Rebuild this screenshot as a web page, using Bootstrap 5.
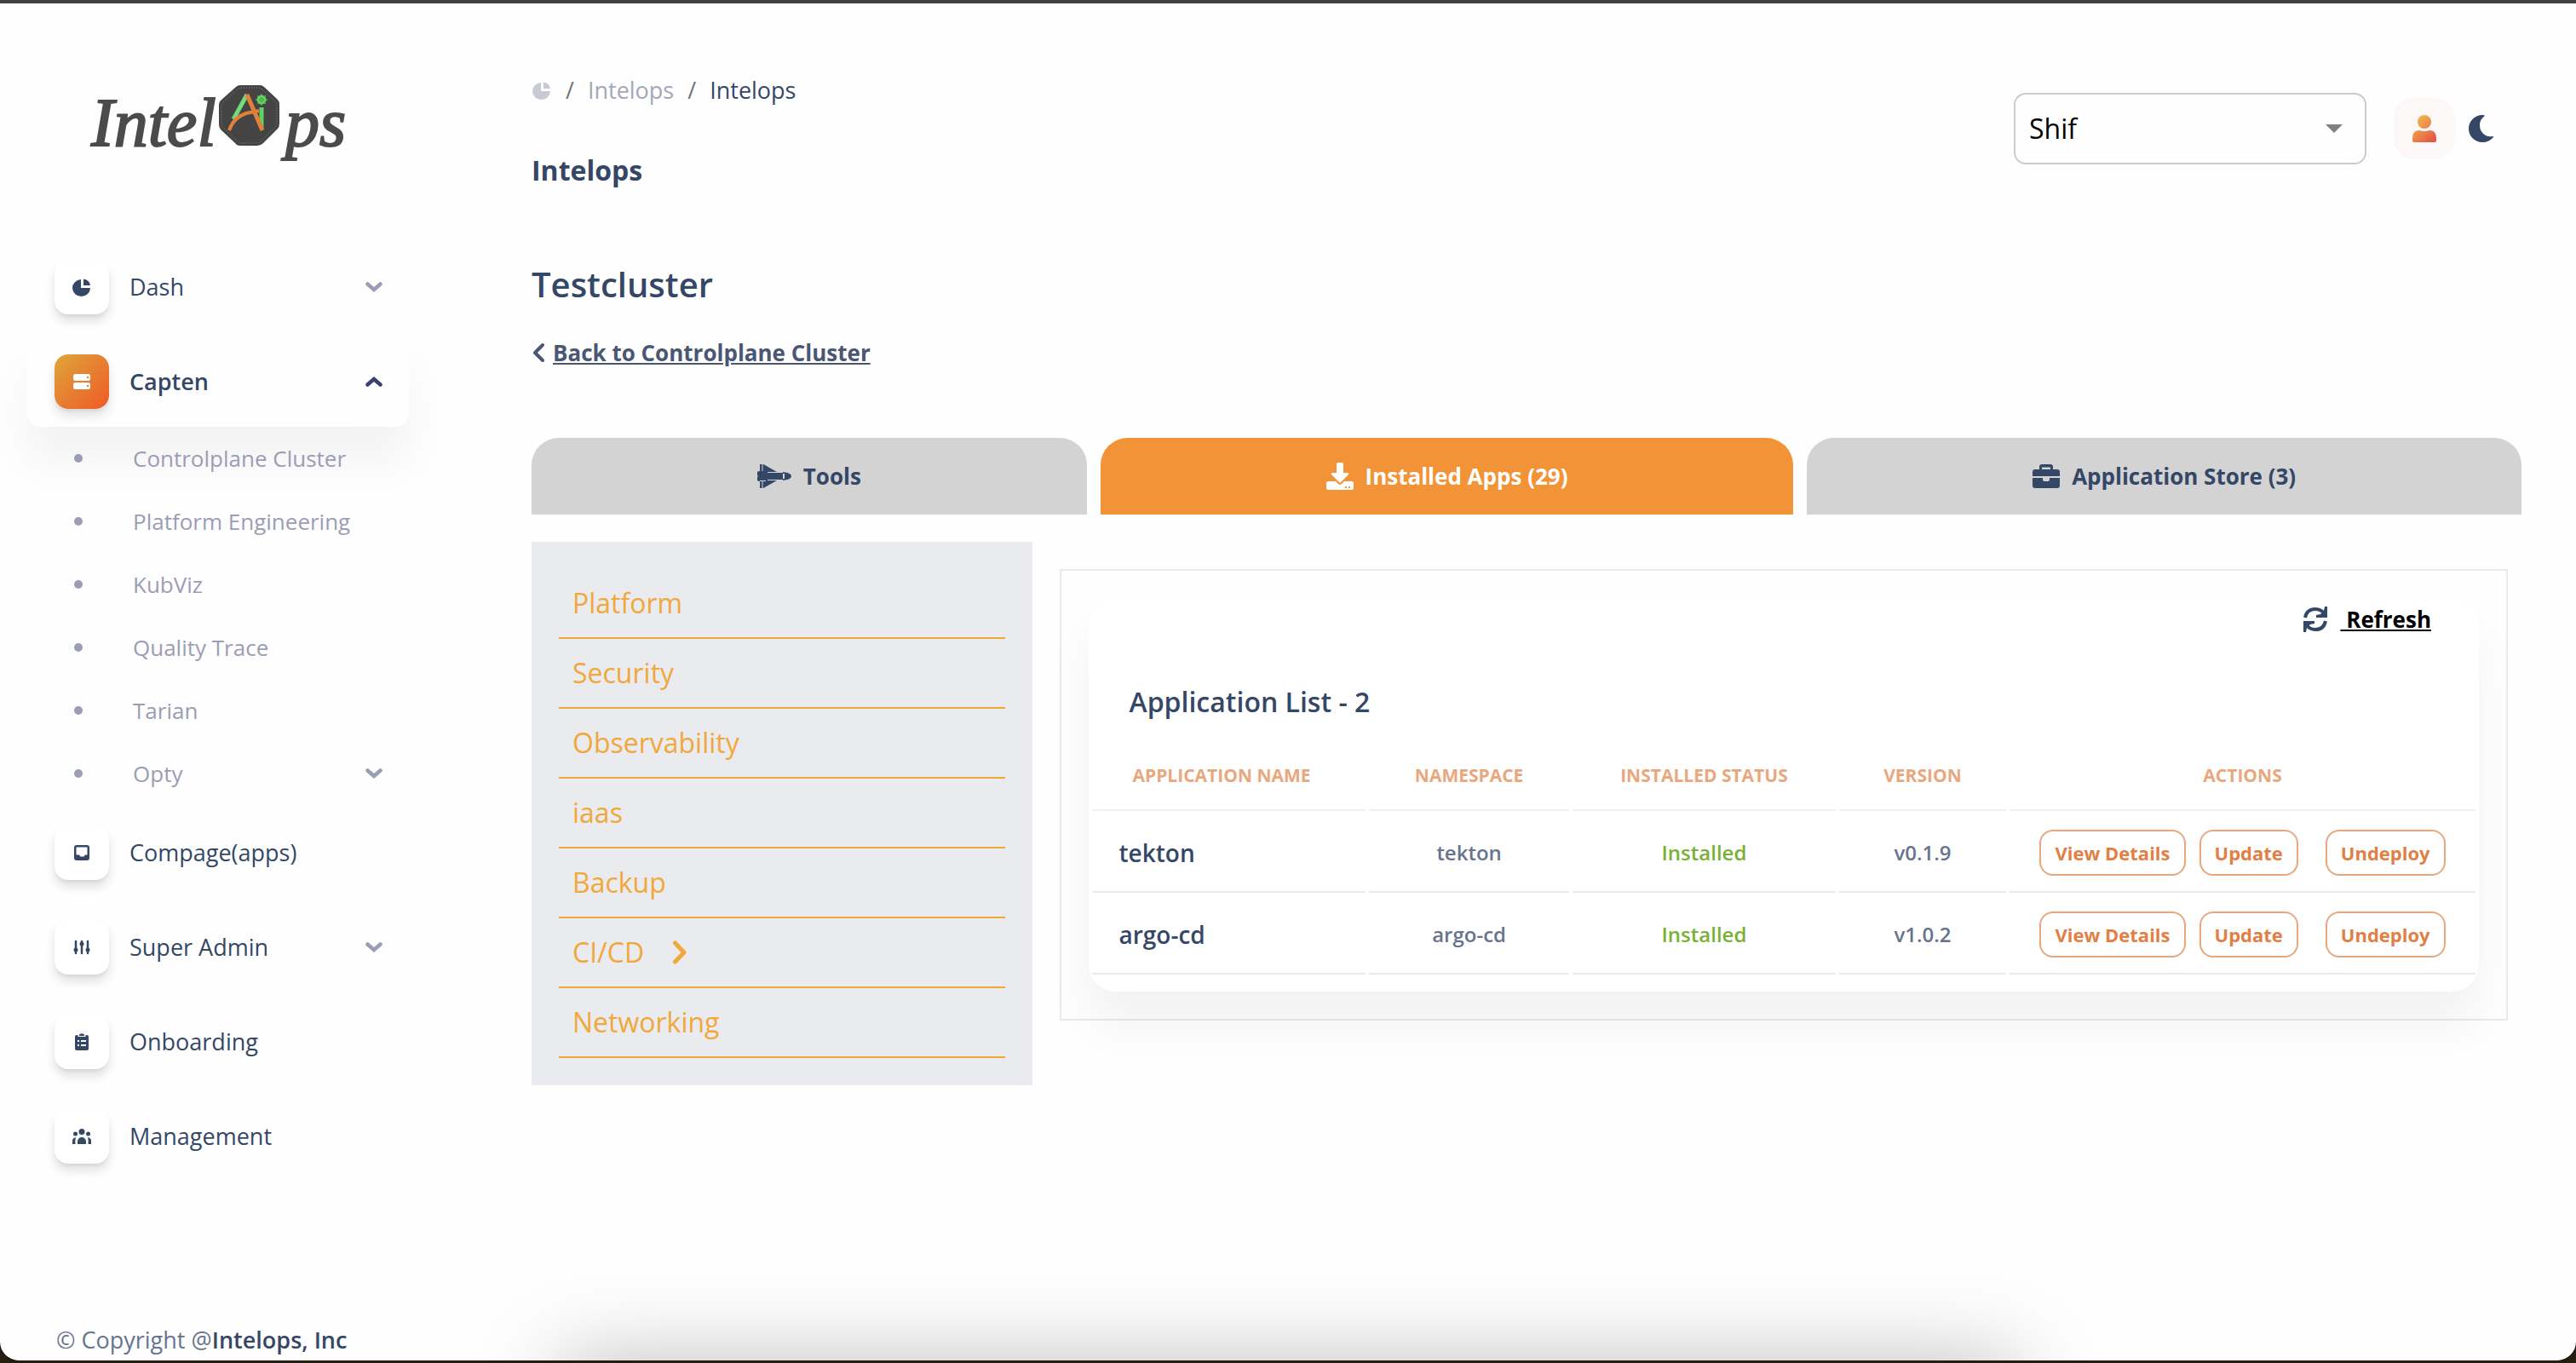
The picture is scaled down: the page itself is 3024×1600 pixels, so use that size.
<!DOCTYPE html>
<html lang="en">
<head>
<meta charset="utf-8">
<meta name="viewport" content="width=device-width, initial-scale=1">
<title>Intelops</title>
<link href="https://cdn.jsdelivr.net/npm/bootstrap@5.3.0/dist/css/bootstrap.min.css" rel="stylesheet">
<style>
:root{--ink:#344767;--soft:#67748e;--muted:#9b9db5;--amber:#f1a83b}
body{font-family:"Open Sans","Noto Sans",sans-serif;font-size:27px;line-height:40px;color:var(--soft);background:#241d10}
svg{display:block;flex:none;fill:currentColor}
.shell{min-height:calc(100vh - 3px);background:#fefefe;border-top:4px solid #434242;border-radius:0 0 22px 22px;overflow:hidden;position:relative;box-shadow:0 1px 0 #000}
.dock-shade{position:absolute;left:656px;right:656px;bottom:-200px;height:200px;box-shadow:0 0 100px rgba(0,0,0,.25)}
.side{width:512px;flex:none;padding:92px 32px 0}
.logo{width:308px;height:108px;margin-left:72px}
.logo text{font:italic 80px "Liberation Serif",serif;fill:#4b4b4b;stroke:#4b4b4b;stroke-width:2px}
.side-nav{padding-top:80px}
.side-link{display:flex;align-items:center;height:106px;margin-bottom:5px;padding:0 32px;border-radius:16px;color:var(--ink);text-decoration:none}
.side-link.current{background:#fefefe;box-shadow:0 40px 54px rgba(0,0,0,.05);font-weight:600}
.tile{width:64px;height:64px;border-radius:16px;display:flex;align-items:center;justify-content:center;margin-right:24px;background:#fff;box-shadow:0 8px 12px rgba(20,20,20,.12),0 4px 4px -2px rgba(20,20,20,.07)}
.current .tile{background:linear-gradient(135deg,#dfa537,#ee5a2a);color:#fff}
.sub-link{display:flex;align-items:center;height:74px;padding:0 32px 0 55px;color:var(--muted);text-decoration:none;font-size:26px}
.sub-link::before{content:"";width:10px;height:10px;border-radius:50%;background:var(--muted);margin-right:59px}
.sub-list{padding-bottom:3px;margin-top:-5px}
.caret{margin-left:auto;margin-right:-1px;color:var(--muted)}
.current .caret{color:#3a416f}
.copyright{padding:161px 0 0 34px}
.copyright a{color:var(--ink);font-weight:600;text-decoration:none}
.page{min-width:0;padding:0 64px 0 112px}
.crumb-bar{padding-top:82px}
.crumbs{--bs-breadcrumb-divider-color:#6c757d;--bs-breadcrumb-item-padding-x:16px;align-items:center;font-size:27px}
.crumbs .breadcrumb-item{display:flex;align-items:center}
.crumbs a{color:#a2a8b8;text-decoration:none}
.crumbs .active{color:var(--ink)}
.page-name{font-size:32px;line-height:44px;font-weight:700;color:var(--ink);margin:52px 0 0}
.cluster{font-size:40px;line-height:56px;font-weight:600;color:var(--ink);margin:84px 0 32px}
.back{display:inline-flex;align-items:center;gap:9px;color:#4a5673;font-weight:700;font-size:26px}
.top-tools{padding:105px 32px 0 0}
.org{width:414px;height:84px;border:2px solid #ccc;border-radius:14px;font-size:32px;color:#000;padding:0 48px 0 16px;margin-right:32px;background:#fefefe url("data:image/svg+xml,%3Csvg xmlns='http://www.w3.org/2000/svg' viewBox='0 0 20 10'%3E%3Cpath fill='%23808080' d='M0 0h20L10 10z'/%3E%3C/svg%3E") no-repeat right 26px center/20px 10px}
.icon-btn{border:0;padding:0;background:none;color:var(--ink)}
.user-btn{width:72px;height:72px;border-radius:24px;background:#fdf8f8;display:flex;align-items:center;justify-content:center}
.tabs{gap:16px;margin-top:78px}
.tab-btn{flex:1 1 auto;height:90px;border:0;border-radius:32px 32px 0 0;background:#d3d3d3;color:var(--ink);font-weight:700;font-size:26px;display:flex;align-items:center;justify-content:center;gap:14px}
.tab-btn.on{background:#f19336;color:#fff}
.cats{width:25.15%;flex:none;background:#eaebef;padding:32px}
.cats a{display:flex;align-items:center;gap:34px;height:82px;padding-left:16px;border-bottom:2px solid var(--amber);color:var(--amber);text-decoration:none;font-size:32px}
.frame{margin:32px 16px 0 32px;border:2px solid #e9eaef;padding:32px;align-self:flex-start;min-width:0}
.sheet{border-radius:32px;background:#fff;box-shadow:0 40px 54px rgba(0,0,0,.05);padding-bottom:16px}
.refresh{display:flex;justify-content:flex-end;align-items:center;gap:14px;padding:5px 56px 0 0;color:var(--ink)}
.refresh a{color:#000;font-weight:700;font-size:26px;white-space:pre}
.list-title{font-size:32px;line-height:44px;font-weight:600;color:var(--ink);margin:0;padding:55px 48px 20px}
.apps{width:100%;table-layout:fixed;border-collapse:separate;border-spacing:4px;text-align:center;font-size:24px;font-weight:600}
.apps th{font-size:21px;line-height:32px;font-weight:700;color:#e9a77e;padding:24px 0;border-bottom:2px solid #f0f0f2}
.apps th:first-child{text-align:left;padding-left:48px}
.apps td{height:92px;padding:0;border-bottom:2px solid #e9eaef}
.apps td:first-child{text-align:left;padding-left:32px;font-size:28px;color:var(--ink)}
.apps .ok{color:#7ab034}
.act{height:54px;border:2px solid #e9a77e;border-radius:16px;background:transparent;color:#e08044;font-size:22px;line-height:32px;font-weight:700;padding:0 16px;white-space:nowrap}
</style>
</head>
<body>
<svg width="0" height="0" class="position-absolute" aria-hidden="true">
<symbol id="pie" viewBox="0 0 24 24"><path d="M11 3v10h11A10.500 10 0 1 1 11 3z"/><path d="M14 2.500a9 8 0 0 1 8 7.500h-8z"/></symbol>
<symbol id="down" viewBox="0 0 20 12"><path d="M2.500 2.500 10 9l7.500-6.500" fill="none" stroke="currentColor" stroke-width="4.500" stroke-linecap="round"/></symbol>
<symbol id="up" viewBox="0 0 20 12"><path d="M2.500 9.500 10 3l7.500 6.500" fill="none" stroke="currentColor" stroke-width="4.500" stroke-linecap="round"/></symbol>
</svg>
<div class="shell">
<div class="d-flex">
<aside class="side">
<a href="#" aria-label="IntelOps">
<svg class="logo" viewBox="0 0 308 108"><text x="3" y="75">Intel</text><text x="231" y="75">ps</text>
<path d="M178 4h23q3 0 5 2l16 15q2 2 2 6v22q0 4-2 6l-17 17q-3 3-7 3h-20q-4 0-6-3l-17-16q-2-3-2-6V27q0-3 2-5l18-16q2-2 5-2z" fill="#444"/>
<path d="M179 7h21q2 0 4 2l15 14q2 2 2 5v20q0 3-2 5l-16 16q-2 3-5 3h-19q-3 0-5-3l-16-15q-2-2-2-5V28q0-2 2-4l17-15q2-2 4-2z" fill="none" stroke="#8a8a8a" stroke-width="1" stroke-dasharray="1 2"/>
<path d="M170 44l16-29" stroke="#74d978" stroke-width="5"/><path d="M203 30v24" stroke="#5fd35f" stroke-width="5"/>
<path d="M186 15l18 42" stroke="#e2803a" stroke-width="5"/><path d="M165 57q5-15 20-20l15-3" fill="none" stroke="#e2803a" stroke-width="4"/>
<circle cx="203" cy="21" r="4" fill="none" stroke="#5fd35f" stroke-width="3"/><path d="M203 14v14M196 21h14M198 16l10 10M208 16l-10 10" stroke="#5fd35f" stroke-width="1"/></svg>
</a>
<nav class="side-nav">
<a class="side-link" href="#"><span class="tile"><svg width="24" height="24"><use href="#pie"/></svg></span>Dash<svg class="caret" width="20" height="12"><use href="#down"/></svg></a>
<a class="side-link current" href="#"><span class="tile"><svg width="20" height="18" viewBox="0 0 20 18"><path fill-rule="evenodd" d="M2.500 0h15A2.500 2.500 0 0 1 20 2.500v3A2.500 2.500 0 0 1 17.500 8h-15A2.500 2.500 0 0 1 0 5.500v-3A2.500 2.500 0 0 1 2.500 0zM16 3v2h2V3zM2.500 10h15a2.500 2.500 0 0 1 2.500 2.500v3a2.500 2.500 0 0 1-2.500 2.500h-15A2.500 2.500 0 0 1 0 15.500v-3A2.500 2.500 0 0 1 2.500 10zM16 13v2h2v-2z"/></svg></span>Capten<svg class="caret" width="20" height="12"><use href="#up"/></svg></a>
<div class="sub-list">
<a class="sub-link" href="#">Controlplane Cluster</a>
<a class="sub-link" href="#">Platform Engineering</a>
<a class="sub-link" href="#">KubViz</a>
<a class="sub-link" href="#">Quality Trace</a>
<a class="sub-link" href="#">Tarian</a>
<a class="sub-link" href="#">Opty<svg class="caret" width="20" height="12"><use href="#down"/></svg></a>
</div>
<a class="side-link" href="#"><span class="tile"><svg width="18" height="18" viewBox="0 0 18 18"><path fill-rule="evenodd" d="M3 0h12a3 3 0 0 1 3 3v12a3 3 0 0 1-3 3H3a3 3 0 0 1-3-3V3a3 3 0 0 1 3-3zM2.500 2.500v9H6l1.500 2h4l1.500-2h2.500v-9z"/></svg></span>Compage(apps)</a>
<a class="side-link" href="#"><span class="tile"><svg width="20" height="18" viewBox="0 0 20 18"><g fill="none" stroke="currentColor" stroke-width="2.500" stroke-linecap="round"><path d="M3 2v14M10 2v14M17 2v14"/></g><circle cx="3" cy="12" r="2.500"/><circle cx="10" cy="5" r="2.500"/><circle cx="17" cy="12" r="2.500"/></svg></span>Super Admin<svg class="caret" width="20" height="12"><use href="#down"/></svg></a>
<a class="side-link" href="#"><span class="tile"><svg width="16" height="20" viewBox="0 0 16 20"><path fill-rule="evenodd" d="M2 2h1.500v2h9V2H14a2 2 0 0 1 2 2v14a2 2 0 0 1-2 2H2a2 2 0 0 1-2-2V4a2 2 0 0 1 2-2zm1 6v2h2V8zm4 0v2h6V8zm-4 5v2h2v-2zm4 0v2h6v-2z"/><path d="M5 1.500Q8-1 11 1.500V3H5z"/></svg></span>Onboarding</a>
<a class="side-link" href="#"><span class="tile"><svg width="22" height="18" viewBox="0 0 22 18"><circle cx="11" cy="3.500" r="3.500"/><circle cx="3.500" cy="6" r="2.500"/><circle cx="18.500" cy="6" r="2.500"/><path d="M6 18v-3a5 5 0 0 1 10 0v3zM0 18v-4q0-3 4-4-1 3-.500 8zM22 18v-4q0-3-4-4 1 3 .500 8z"/></svg></span>Management</a>
</nav>
<div class="copyright">© Copyright @<a href="#">Intelops, Inc</a></div>
</aside>
<main class="page flex-grow-1">
<header class="d-flex justify-content-between align-items-start">
<div>
<nav class="crumb-bar" aria-label="breadcrumb"><ol class="breadcrumb crumbs mb-0">
<li class="breadcrumb-item"><a href="#" aria-label="Home"><svg width="24" height="24" opacity=".6"><use href="#pie"/></svg></a></li>
<li class="breadcrumb-item"><a href="#">Intelops</a></li>
<li class="breadcrumb-item active" aria-current="page">Intelops</li>
</ol></nav>
<h1 class="page-name">Intelops</h1>
</div>
<div class="top-tools d-flex align-items-center">
<select class="org form-select" aria-label="Organisation"><option>Shif</option></select>
<button class="icon-btn user-btn me-3" type="button" aria-label="Account"><svg width="28" height="32" viewBox="0 0 28 32"><defs><linearGradient id="warm" x1="0" y1="0" x2="28" y2="32" gradientUnits="userSpaceOnUse"><stop stop-color="#f3b94f"/><stop offset=".2" stop-color="#f0b050"/><stop offset="1" stop-color="#e54b44"/></linearGradient></defs><g fill="url(#warm)"><circle cx="14" cy="8" r="8"/><path d="M0 30v-3q0-9 8-9 6 2 12 0 8 0 8 9v3q0 2-2 2H2q-2 0-2-2z"/></g></svg></button>
<button class="icon-btn" type="button" aria-label="Dark mode"><svg width="30" height="32" viewBox="0 0 30 32"><path d="M16 0q3 0 3 1-6 4-6 11 0 8 7 12 4 2 8 1 2 0 1 1-5 6-13 6A16 16 0 0 1 16 0z"/></svg></button>
</div>
</header>
<h2 class="cluster">Testcluster</h2>
<a class="back" href="#"><svg width="16" height="24" viewBox="0 0 16 24"><path d="M13 3 4 12l9 9" fill="none" stroke="currentColor" stroke-width="4" stroke-linecap="round" stroke-linejoin="round"/></svg>Back to Controlplane Cluster</a>
<div class="tabs d-flex" role="tablist">
<button class="tab-btn" type="button" role="tab"><svg width="40" height="28" viewBox="0 0 40 28"><path d="M0 9l2-1h8v12H2l-2-1v-4l1-1-1-1zM3 0q3-1 6 1l14 8H3zM3 28q3 1 6-1l14-8H3zM10 9h20q10 1 10 5t-10 5H10z"/><path d="M12 9.500h18M12 18.500h18M6 0v8M6 20v8" stroke="#d3d3d3" stroke-width="1" fill="none"/><rect x="30" y="11" width="2" height="6" fill="#d3d3d3"/></svg>Tools</button>
<button class="tab-btn on" type="button" role="tab" aria-selected="true"><svg width="32" height="32" viewBox="0 0 32 32"><path d="M12 2q0-2 2-2h4q2 0 2 2v10h5q2 0 1 2l-9 9q-1 1-2 0l-9-9q-1-2 1-2h5z"/><path fill-rule="evenodd" d="M2 22h9l3 3q2 2 4 0l3-3h9q2 0 2 2v6q0 2-2 2H2q-2 0-2-2v-6q0-2 2-2zm20 6v2h2v-2zm4 0v2h2v-2z"/></svg>Installed Apps (29)</button>
<button class="tab-btn" type="button" role="tab"><svg width="32" height="28" viewBox="0 0 32 28"><path fill-rule="evenodd" d="M8 6V3q0-3 3-3h10q3 0 3 3v3h5q3 0 3 3v5H0V9q0-3 3-3zm3 0h10V3.500H11z"/><path d="M0 16h12v2q0 2 2 2h4q2 0 2-2v-2h12v9q0 3-3 3H3q-3 0-3-3z"/></svg>Application Store (3)</button>
</div>
<div class="d-flex mt-4 pt-2">
<nav class="cats" aria-label="Categories">
<a href="#">Platform</a><a href="#">Security</a><a href="#">Observability</a><a href="#">iaas</a><a href="#">Backup</a>
<a href="#">CI/CD<svg width="16" height="28" viewBox="0 0 16 28"><path d="M2.500 3 13 14 2.500 25" fill="none" stroke="currentColor" stroke-width="5" stroke-linecap="round" stroke-linejoin="round"/></svg></a>
<a href="#">Networking</a>
</nav>
<section class="frame flex-grow-1">
<div class="sheet">
<div class="refresh"><svg width="30" height="30" viewBox="0 0 30 30"><g fill="none" stroke="currentColor" stroke-width="4"><path d="M3 13Q5 3 15 3q7 0 11 6M27 17q-2 10-12 10-7 0-11-6"/></g><path d="M29 0v13H16v-3l5-1 4-4 1-5zM1 30V17h13v3l-5 1-4 4-1 5z"/></svg><a href="#"> Refresh</a></div>
<h3 class="list-title">Application List - 2</h3>
<table class="apps">
<colgroup><col style="width:20%"><col style="width:14.6%"><col style="width:19.2%"><col style="width:12.2%"><col style="width:34%"></colgroup>
<thead><tr><th scope="col">APPLICATION NAME</th><th scope="col">NAMESPACE</th><th scope="col">INSTALLED STATUS</th><th scope="col">VERSION</th><th scope="col">ACTIONS</th></tr></thead>
<tbody>
<tr><td>tekton</td><td>tekton</td><td class="ok">Installed</td><td>v0.1.9</td><td><div class="d-flex justify-content-center"><button class="act me-3" type="button">View Details</button><button class="act me-3" type="button">Update</button><button class="act ms-3" type="button">Undeploy</button></div></td></tr>
<tr><td>argo-cd</td><td>argo-cd</td><td class="ok">Installed</td><td>v1.0.2</td><td><div class="d-flex justify-content-center"><button class="act me-3" type="button">View Details</button><button class="act me-3" type="button">Update</button><button class="act ms-3" type="button">Undeploy</button></div></td></tr>
</tbody>
</table>
</div>
</section>
</div>
</main>
</div>
<div class="dock-shade"></div>
</div>
<script src="https://cdn.jsdelivr.net/npm/bootstrap@5.3.0/dist/js/bootstrap.bundle.min.js"></script>
</body>
</html>
